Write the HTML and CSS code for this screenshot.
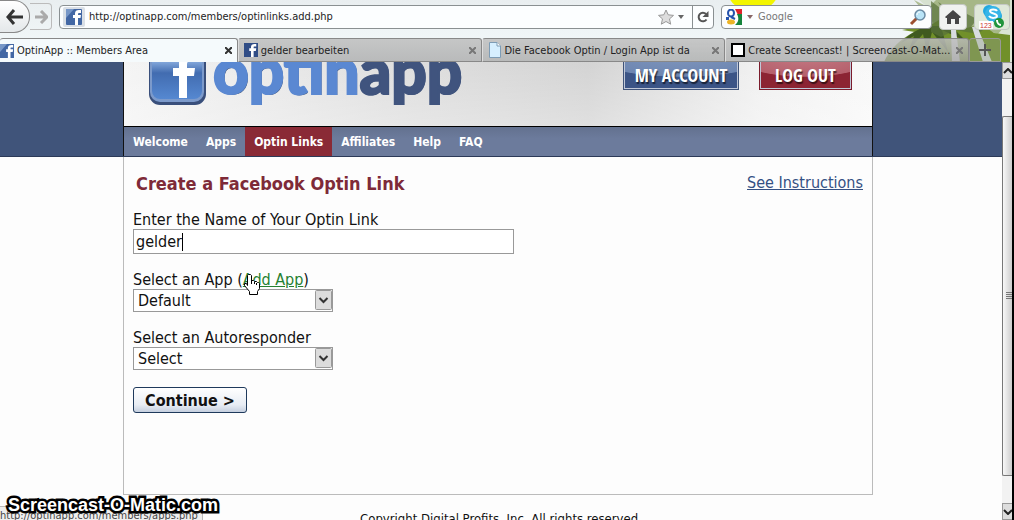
FILE: index.html
```html
<!DOCTYPE html>
<html lang="en">
<head>
  <meta charset="UTF-8">
  <meta name="viewport" content="width=device-width, initial-scale=1.0">
  <title>OptinApp :: Members Area</title>
  <link rel="stylesheet" href="styles.css">
</head>
<body>
  <div class="browser">
    <!-- Browser theme artwork -->
    <svg class="theme-art" width="300" height="62" viewBox="0 0 300 62" aria-hidden="true">
      <ellipse cx="41" cy="-8" rx="25" ry="19" fill="#f3f500"/>
      <path d="M207 0h93v62H172c5-12 14-21 29-30l11-8-8-8 12 2-7-10 13 5z" fill="#c4d4b0" opacity=".5"/>
      <path d="M202 0l16 8 4-6 2-2h74v20l-12 14-20-6-12 6-24-1z" fill="#8c9f60" opacity=".65"/>
      <path d="M172 62c6-13 17-24 31-30l-13-2 15-3-9-4 21 3 10-6 12 6 10-4 6 6 14-4 13 9 16 2v27z" fill="#71902a"/>
      <path d="M218 26c-12 2-21 8-29 17l13-7-5 14 14-16 4 18 5-20 16 20-6-22 24 11-15-15z" fill="#405a20"/>
      <path d="M219 1l13 10-6-9 16 10 3 12 10-10 10 5-6 8 21-4-14 11-23-4-14 7-10-5z" fill="#59713a" opacity=".7"/>
      <path d="M260 27l11 35h9l-15-36zM239 30l1 32h8l-4-32z" fill="#d8dce0"/>
    </svg>

    <div class="toolbar">
      <div class="nav-buttons">
        <button class="back" aria-label="Back">
          <svg width="18" height="16" viewBox="0 0 18 16"><path d="M8 1L2 8l6 7M2 8h15" fill="none" stroke="#333" stroke-width="3"/></svg>
        </button>
        <button class="forward" aria-label="Forward">
          <svg width="14" height="14" viewBox="0 0 14 14"><path d="M7 1l6 6-6 6M12 7H1" fill="none" stroke="#aaa" stroke-width="3"/></svg>
        </button>
      </div>
      <div class="address">
        <span class="site-id"><svg class="fb" width="16" height="16" viewBox="0 0 16 16"><rect width="16" height="16" rx="1" fill="#4267a4"/><path d="M0 0h8L0 9z" fill="#7797c7"/><path d="M9 16V9H7V6h2V4.500C9 2 10.500 1 13 1h2v3h-1.500c-1 0-1.500 0-1.500 1v1h3l-.5 3H12v7z" fill="#fff"/></svg></span>
        <input class="url" type="text" value="http://optinapp.com/members/optinlinks.add.php" aria-label="Address">
        <svg width="16" height="16" viewBox="0 0 16 16"><path d="M8 1l2.200 4.800 5.300.6-4 3.500 1.200 5.300L8 12.500l-4.700 2.700 1.200-5.300-4-3.500 5.300-.6z" fill="#ddd" stroke="#999"/></svg>
        <svg class="caret" width="6" height="4" viewBox="0 0 6 4"><path d="M0 0h6L3 4z" fill="#666"/></svg>
        <button class="reload" aria-label="Reload">
          <svg width="12" height="12" viewBox="0 0 12 12"><path d="M9.500 8.500A4.300 4.300 0 1 1 9 3" fill="none" stroke="#555" stroke-width="2"/><path d="M11.500 0v6h-6z" fill="#555"/></svg>
        </button>
      </div>
      <div class="search">
        <svg width="16" height="16" viewBox="0 0 16 16"><rect width="16" height="16" fill="#fff"/><path d="M9 0h7v6h-4z" fill="#e0232a"/><path d="M11 5h5v11H9c4-3 4-7 2-11z" fill="#16843c"/><ellipse cx="5" cy="4" rx="3" ry="3.500" fill="none" stroke="#2553ac" stroke-width="2"/><path d="M0 8h3v3H0z" fill="#2553ac"/><path d="M5 8l4 2" stroke="#2553ac" stroke-width="2"/><ellipse cx="5" cy="13" rx="4" ry="2.500" fill="#edb427"/></svg>
        <svg width="6" height="4" viewBox="0 0 6 4"><path d="M0 0h6L3 4z" fill="#866"/></svg>
        <input class="search-text" type="text" placeholder="Google" aria-label="Search">
        <svg width="18" height="18" viewBox="0 0 18 18"><path d="M8 10l-6 6" stroke="#9c4f31" stroke-width="3"/><circle cx="11" cy="7" r="5" fill="#b9e4f7" stroke="#6b8ba3" stroke-width="1.500"/><path d="M8 7c0-2 1-3 3-3" stroke="#fff" fill="none"/></svg>
      </div>
      <button class="tool" aria-label="Home">
        <svg width="16" height="14" viewBox="0 0 16 14"><path d="M8 0l8 7-1 1h-1v6h-4V9H6v5H2V8H1L0 7z" fill="#454545"/></svg>
      </button>
      <button class="tool skype" aria-label="Skype">
        <svg width="28" height="24" viewBox="0 0 28 24"><circle cx="11" cy="6" r="6" fill="#23a8e0"/><circle cx="18" cy="11" r="6" fill="#23a8e0"/><circle cx="15" cy="9" r="8" fill="#37b5e8"/><path d="M19 6c-1-2-7-2-7 0 0 3 7 2 7 5 0 2-6 3-8 0" fill="none" stroke="#fff" stroke-width="2"/><rect x="1" y="16" width="14" height="8" fill="#fff"/><text x="2" y="23" class="badge-text">123</text><circle cx="21" cy="18" r="5" fill="#21943c"/><path d="M19 15c0 3 2 5 4 5" stroke="#fff" stroke-width="2" fill="none"/></svg>
      </button>
    </div>

    <div class="tabs">
      <div class="tab active">
        <svg class="fb" width="14" height="14" viewBox="0 0 16 16"><rect width="16" height="16" fill="#4267a4"/><path d="M0 0h8L0 9z" fill="#7797c7"/><path d="M9 16V9H7V6h2V4.500C9 2 10.500 1 13 1h2v3h-1.500c-1 0-1.500 0-1.500 1v1h3l-.5 3H12v7z" fill="#fff"/></svg>
        <span class="tab-title">OptinApp :: Members Area</span>
        <button class="close" aria-label="Close tab"><svg width="7" height="7" viewBox="0 0 7 7"><path d="M0 0l7 7M7 0L0 7" stroke="#333" stroke-width="2"/></svg></button>
      </div>
      <div class="tab">
        <svg class="fb" width="14" height="14" viewBox="0 0 16 16"><rect width="16" height="16" fill="#304d86"/><path d="M8 16V9H6V6h2V4.500C8 2 9.500 1 12 1h2v3h-1.500c-1 0-1.500 0-1.500 1v1h3l-.5 3H11v7z" fill="#fff"/></svg>
        <span class="tab-title">gelder bearbeiten</span>
        <button class="close" aria-label="Close tab"><svg width="7" height="7" viewBox="0 0 7 7"><path d="M0 0l7 7M7 0L0 7" stroke="#777" stroke-width="2"/></svg></button>
      </div>
      <div class="tab">
        <svg width="14" height="16" viewBox="0 0 14 16"><path d="M1.500.5H9L12.500 4v11.500h-11z" fill="#d6efff" stroke="#7d9cb5"/><path d="M9 .5V4h3.500" fill="#fff" stroke="#7d9cb5"/></svg>
        <span class="tab-title">Die Facebook Optin / Login App ist da</span>
        <button class="close" aria-label="Close tab"><svg width="7" height="7" viewBox="0 0 7 7"><path d="M0 0l7 7M7 0L0 7" stroke="#777" stroke-width="2"/></svg></button>
      </div>
      <div class="tab">
        <svg width="14" height="14" viewBox="0 0 14 14"><rect x="1" y="1" width="12" height="12" fill="#fff" stroke="#000" stroke-width="2"/></svg>
        <span class="tab-title">Create Screencast! | Screencast-O-Mat...</span>
        <button class="close" aria-label="Close tab"><svg width="7" height="7" viewBox="0 0 7 7"><path d="M0 0l7 7M7 0L0 7" stroke="#777" stroke-width="2"/></svg></button>
      </div>
      <button class="new-tab" aria-label="New tab"><svg width="12" height="12" viewBox="0 0 12 12"><path d="M6 0v12M0 6h12" stroke="#555" stroke-width="2"/></svg></button>
    </div>
  </div>

  <div class="viewport">
    <div class="page">
      <div class="band">
        <div class="wrap top">
          <div class="header">
            <div class="logo">
              <svg width="60" height="60" viewBox="0 0 60 60" aria-hidden="true">
                <defs>
                  <linearGradient id="tile" x1="0" y1="0" x2="0" y2="1"><stop offset="0" stop-color="#9ab7e0"/><stop offset=".3" stop-color="#7ea3d8"/><stop offset=".5" stop-color="#426cb0"/><stop offset="1" stop-color="#5588d1"/></linearGradient>
                </defs>
                <rect x="1" y="1" width="57" height="58" rx="11" fill="#394f7b"/>
                <rect x="2" y="0" width="54" height="56" rx="10" fill="#7c9acb"/>
                <rect x="4" y="1" width="50" height="52" rx="8" fill="url(#tile)"/>
                <path d="M31 52V30h-6v-8h6v-5c0-8 5-11 11-11h5v9h-4c-3 0-4 1-4 4v3h8l-1 8h-7v22z" fill="#fff"/>
              </svg>
              <span class="brand">optin<span class="brand-dark">app</span></span>
            </div>
            <div class="header-buttons">
              <button class="pill blue">MY ACCOUNT</button>
              <button class="pill red">LOG OUT</button>
            </div>
          </div>
          <div class="menu">
            <a href="#">Welcome</a>
            <a href="#">Apps</a>
            <a href="#" class="current">Optin Links</a>
            <a href="#">Affiliates</a>
            <a href="#">Help</a>
            <a href="#">FAQ</a>
          </div>
        </div>
      </div>

      <div class="wrap content">
        <div class="title-row">
          <h1>Create a Facebook Optin Link</h1>
          <a href="#" class="instructions">See Instructions</a>
        </div>
        <form>
          <div class="form-group">
            <label for="name">Enter the Name of Your Optin Link</label>
            <div class="name-field">
              <input type="text" id="name" value="gelder">
              <span class="text-caret"></span>
            </div>
          </div>
          <div class="form-group">
            <div class="label-row">
              <label for="app">Select an App</label> (<a href="#" class="add-app">Add App</a>)
              <svg class="cursor" width="17" height="23" viewBox="0 0 17 23" aria-hidden="true"><path d="M4.500 12.500V2.500l1-1h2l1 1v5h2l1 1h2l1 1h1l1 1v5l-2 3v3h-8v-3l-5-6v-2h2z" fill="#fff" stroke="#000"/><path d="M8.500 7v4M11.500 9v2M13.500 10v2" stroke="#000"/></svg>
            </div>
            <div class="select-box">
              <select id="app"><option>Default</option></select>
              <svg class="arrow" width="17" height="20" viewBox="0 0 17 20" aria-hidden="true"><rect x=".5" y=".5" width="16" height="19" rx="1" fill="#dcdcdc" stroke="#999"/><path d="M4.500 8l4 4 4-4" fill="none" stroke="#333" stroke-width="2"/></svg>
            </div>
          </div>
          <div class="form-group">
            <label for="autoresponder">Select an Autoresponder</label>
            <div class="select-box">
              <select id="autoresponder"><option>Select</option></select>
              <svg class="arrow" width="17" height="20" viewBox="0 0 17 20" aria-hidden="true"><rect x=".5" y=".5" width="16" height="19" rx="1" fill="#dcdcdc" stroke="#999"/><path d="M4.500 8l4 4 4-4" fill="none" stroke="#333" stroke-width="2"/></svg>
            </div>
          </div>
          <button type="button" class="continue">Continue &gt;</button>
        </form>
      </div>
      <div class="wrap footer">Copyright Digital Profits, Inc. All rights reserved.</div>
    </div>

    <div class="scrollbar">
      <div class="scroll-button"><svg width="9" height="6" viewBox="0 0 9 6"><path d="M1 5l4-4 4 4" fill="none" stroke="#222" stroke-width="2"/></svg></div>
      <div class="scroll-thumb"><svg width="6" height="8" viewBox="0 0 6 8"><path d="M0 .5h6M0 2.500h6M0 4.500h6M0 6.500h6" stroke="#777"/></svg></div>
      <div class="scroll-button"><svg width="9" height="6" viewBox="0 0 9 6"><path d="M1 1l4 4 4-4" fill="none" stroke="#222" stroke-width="2"/></svg></div>
    </div>
  </div>

  <div class="status">http://optinapp.com/members/apps.php</div>
  <div class="watermark">Screencast-O-Matic.com</div>
</body>
</html>
```

FILE: styles.css
```css
* {
  box-sizing: border-box;
}
body {
  margin: 0;
  height: 100vh;
  overflow: hidden;
  display: flex;
  flex-direction: column;
  background-color: #fdfdfd;
  color: #111;
  font-family: "DejaVu Sans Condensed", Tahoma, sans-serif;
  font-size: 16px;
}
button, input, select {
  font-family: inherit;
  margin: 0;
}
button {
  padding: 0;
  border: none;
  background: none;
}
svg {
  flex: none;
  display: block;
}

/* Browser chrome */
.browser {
  position: relative;
  flex: none;
  background: linear-gradient(#e9eef0, #f5fbfc);
  border-right: 2px solid #000;
}
.theme-art {
  position: absolute;
  top: 0;
  right: 0;
}
.toolbar {
  position: relative;
  display: flex;
  align-items: center;
  height: 38px;
  padding: 0 2px 5px 0;
  gap: 7px;
}
.nav-buttons {
  display: flex;
  align-items: center;
}
.back {
  display: flex;
  align-items: center;
  justify-content: center;
  width: 30px;
  height: 33px;
  border: 1px solid #888;
  border-left: none;
  border-radius: 0 16px 16px 0;
  background: linear-gradient(#fff, #e4e8ea);
}
.forward {
  display: flex;
  align-items: center;
  justify-content: center;
  width: 22px;
  height: 27px;
  border: 1px solid #bbb;
  border-left: none;
  border-radius: 0 4px 4px 0;
}
.address, .search {
  display: flex;
  align-items: center;
  height: 24px;
  border: 1px solid #8a9092;
  border-radius: 4px;
  background-color: #fcfeff;
}
.address {
  flex: 1;
  padding-left: 3px;
  gap: 4px;
}
.site-id {
  display: flex;
  justify-content: center;
  width: 22px;
  padding: 2px 0;
  border-radius: 2px;
  background-color: #d9dfe6;
}
.url, .search-text {
  flex: 1;
  min-width: 0;
  padding: 0;
  border: none;
  background: none;
  color: #222;
  font-size: 11px;
}
.search-text::placeholder {
  color: #777;
}
.address .caret {
  margin-right: 4px;
}
.reload {
  display: flex;
  align-items: center;
  justify-content: center;
  width: 21px;
  height: 22px;
  border-left: 1px solid #8a9092;
}
.search {
  width: 211px;
  padding: 0 4px;
  gap: 5px;
}
.tool {
  display: flex;
  align-items: center;
  justify-content: center;
  width: 28px;
  height: 26px;
  border: 1px solid #c4c8c4;
  border-radius: 4px;
  background-color: #f0f2f0;
}
.skype {
  width: 36px;
  background-color: #dfe8d8;
}
.badge-text {
  font-family: "Liberation Sans", sans-serif;
  font-size: 7px;
  fill: #c33;
}
.tabs {
  position: relative;
  display: flex;
  height: 24px;
  padding-right: 11px;
}
.tab {
  flex: 1;
  display: flex;
  align-items: center;
  gap: 3px;
  min-width: 0;
  padding: 0 5px;
  border: 1px solid #888;
  border-left-color: #ddd;
  border-radius: 3px 3px 0 0;
  background: linear-gradient(rgba(190, 190, 190, 0.85), rgba(165, 165, 165, 0.75));
}
.tab.active {
  padding-left: 0;
  border-left: none;
  border-bottom: none;
  background: #f5fafc;
}
.tab-title {
  flex: 1;
  white-space: nowrap;
  color: #222;
  font-size: 11px;
}
.new-tab {
  display: flex;
  align-items: center;
  justify-content: center;
  width: 32px;
  border: 1px solid #999;
  border-radius: 3px 3px 0 0;
  background-color: rgba(150, 160, 140, 0.4);
}

/* Page */
.viewport {
  flex: 1;
  display: flex;
  min-height: 0;
  overflow: hidden;
}
.page {
  flex: 1;
  margin-top: -8px;
}
.band {
  padding-right: 6px;
  border-bottom: 1px solid #2c3a58;
  background-color: #40547a;
}
.wrap {
  width: 750px;
  margin: 0 auto;
}
.top {
  border-left: 1px solid #111;
  border-right: 1px solid #111;
}
.header {
  display: flex;
  justify-content: space-between;
  height: 73px;
  padding: 0 20px 0 24px;
  border-bottom: 1px solid #000;
  background: linear-gradient(rgba(255, 255, 255, 0), rgba(255, 255, 255, 0.3)), linear-gradient(90deg, #f4f4f4, #dedede 35%, #d2d2d2 62%, #f0f0f0 85%, #f8f8f8);
}
.logo {
  display: flex;
  align-items: flex-end;
  gap: 5px;
  height: 52px;
}
.brand {
  color: #5a88d2;
  font-family: Lato, sans-serif;
  font-size: 62px;
  font-weight: 900;
  line-height: 72px;
  text-shadow: 1px 1px 0 #40547a;
  -webkit-text-stroke: 2px currentColor;
}
.brand-dark {
  color: #40547e;
}
.header-buttons {
  display: flex;
  gap: 20px;
}
.pill {
  height: 36px;
  padding-top: 6px;
  border: 1px solid #40547a;
  box-shadow: inset 0 0 0 1px #c0c8d8;
  color: #fff;
  font-family: "Open Sans Condensed", "Roboto Condensed", "Liberation Sans Narrow", "Open Sans", sans-serif;
  font-size: 18px;
  font-weight: bold;
  line-height: 26px;
  text-shadow: 1px 2px 1px rgba(0, 0, 0, 0.6);
  white-space: nowrap;
}
.blue {
  width: 116px;
  background: radial-gradient(80% 22px at 50% 0, #8096bd, #6d86b1 97%, #3b5486);
}
.red {
  width: 93px;
  border-color: #7c1c2c;
  background: radial-gradient(80% 22px at 50% 0, #c47a84, #b5606c 97%, #8c2433);
}
.menu {
  display: flex;
  height: 29px;
  background: linear-gradient(#63718f, #6c7b9c 40%);
}
.menu a {
  padding: 0 9px;
  color: #fff;
  font-size: 12px;
  font-weight: bold;
  line-height: 30px;
  text-decoration: none;
}
.menu .current {
  background-color: #8a2a36;
}
.content {
  position: relative;
  left: -3px;
  height: 338px;
  padding: 16px 9px;
  border: 1px solid #bbb;
  border-top: none;
}
.title-row {
  display: flex;
  justify-content: space-between;
}
h1 {
  margin: 0;
  padding-left: 3px;
  color: #7e2a38;
  font-size: 18px;
  line-height: 22px;
}
.instructions {
  color: #345083;
  line-height: 20px;
}
form {
  padding-top: 16px;
}
.form-group {
  margin-bottom: 17px;
  line-height: 18px;
}
.label-row {
  position: relative;
}
.add-app {
  color: #268030;
}
.cursor {
  position: absolute;
  top: 2px;
  left: 110px;
  z-index: 1;
}
.name-field {
  position: relative;
}
.name-field input {
  display: block;
  width: 381px;
  height: 25px;
  padding: 0 2px;
  border: 1px solid #999;
  background-color: #fff;
  color: #111;
  font-size: 16px;
}
.text-caret {
  position: absolute;
  top: 4px;
  left: 49px;
  width: 1px;
  height: 18px;
  background-color: #000;
}
.select-box {
  position: relative;
  width: 200px;
}
.select-box select {
  display: block;
  appearance: none;
  width: 100%;
  height: 23px;
  padding: 0 4px;
  border: 1px solid #999;
  border-radius: 0;
  background-color: #fff;
  color: #111;
  font-size: 16px;
}
.arrow {
  position: absolute;
  top: 1px;
  right: 1px;
  pointer-events: none;
}
.continue {
  display: block;
  width: 114px;
  height: 26px;
  border: 1px solid #1f3a5c;
  border-radius: 3px;
  background: linear-gradient(#fff, #e8edf4 70%, #c5cfdf);
  color: #111;
  font-size: 16px;
  font-weight: bold;
}
.footer {
  padding-top: 16px;
  font-size: 13px;
  text-align: center;
}

/* Scrollbar */
.scrollbar {
  display: flex;
  flex-direction: column;
  width: 12px;
  border-right: 2px solid #000;
  background-color: #f2f2f2;
}
.scroll-button {
  display: flex;
  align-items: center;
  height: 17px;
  border: 1px solid #999;
  border-right: none;
  background-color: #ddd;
  overflow: hidden;
}
.scroll-thumb {
  flex: 1;
  display: flex;
  align-items: center;
  justify-content: flex-end;
  margin: 37px 0 27px;
  border: 1px solid #777;
  border-right: none;
  border-radius: 2px 0 0 2px;
  background: linear-gradient(90deg, #f8f8f8, #ccc);
}

/* Overlays */
.status {
  position: absolute;
  bottom: 0;
  left: 0;
  height: 14px;
  padding-right: 4px;
  border-top: 1px solid #bbb;
  border-right: 1px solid #bbb;
  background-color: #eee;
  color: #444;
  font-size: 11px;
  line-height: 18px;
  overflow: hidden;
}
.watermark {
  position: absolute;
  bottom: 4px;
  left: 8px;
  color: #fff;
  font-family: "Liberation Sans", Arial, sans-serif;
  font-size: 18px;
  font-weight: bold;
  line-height: 22px;
  -webkit-text-stroke: 5px #000;
  paint-order: stroke fill;
}
```
